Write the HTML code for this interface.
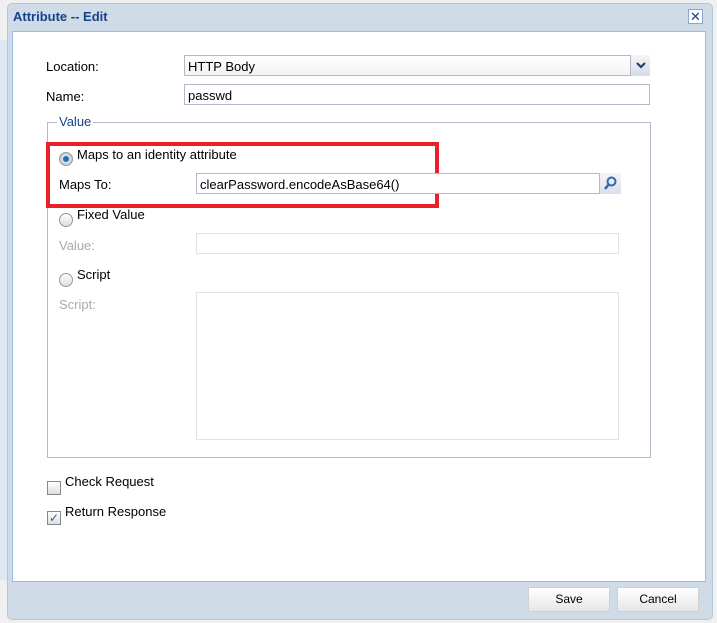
<!DOCTYPE html>
<html><head><style>
body{margin:0;width:717px;height:623px;background:#f0f0f0;position:relative;overflow:hidden;font-family:"Liberation Sans",sans-serif;font-size:12px;color:#000}
.a{position:absolute}
.dlg{left:7px;top:3px;width:704px;height:615px;background:#cfdbe7;border:1px solid #b5c6d8;border-radius:5px}
.body{left:12px;top:31px;width:692px;height:549px;background:#fff;border:1px solid #99bbe8}
.inp{position:absolute;border:1px solid #b5b8c8;background:#fff;height:21px;box-sizing:border-box;padding:3px 3px;font-size:13px}
.dis{border-color:#e3e3e3}
.lbl{position:absolute;font-size:13px}
.g{color:#aaa}
.radio{position:absolute;width:12px;height:12px;border-radius:50%;border:1px solid #999;background:linear-gradient(#fff,#ddd)}
.cb{position:absolute;width:12px;height:12px;border:1px solid #888;background:linear-gradient(#fff,#ddd)}
.btn{position:absolute;top:587px;height:23px;border:1px solid #d0d0d0;background:linear-gradient(#fff,#e6e6e6);text-align:center;line-height:23px;font-size:12px}
</style></head><body>
<div class="a" style="left:0;top:40px;width:7px;height:540px;background:#dfe8f1"></div>
<div class="a dlg"></div>
<div class="a" style="left:13px;top:9px;font-weight:bold;color:#15428b;font-size:13px">Attribute -- Edit</div>
<div class="a" style="left:688px;top:9px;width:13px;height:13px;border:1px solid #8aa7cc;background:#fff;color:#15428b;font-size:13px;line-height:13px;text-align:center">✕</div>
<div class="a body"></div>
<div class="lbl" style="left:46px;top:59px">Location:</div>
<div class="inp" style="left:184px;top:55px;width:466px;background:linear-gradient(#fff,#f3f3f3)">HTTP Body</div>
<div class="a" style="left:630px;top:55px;width:20px;height:21px;background:linear-gradient(#f5f5f5,#d8dce6);border-left:1px solid #b5b8c8;box-sizing:border-box"><svg width="20" height="21"><path d="M6 8 L10 12 L14 8" fill="none" stroke="#1f3f78" stroke-width="2.2"/></svg></div>
<div class="lbl" style="left:46px;top:89px">Name:</div>
<div class="inp" style="left:184px;top:84px;width:466px">passwd</div>
<div class="a" style="left:47px;top:122px;width:602px;height:334px;border:1px solid #b5b8c8"></div>
<div class="lbl" style="left:57px;top:114px;background:#fff;padding:0 2px;color:#15428b">Value</div>
<div class="a" style="left:46px;top:142px;width:385px;height:58px;border:4px solid #e8202a"></div>
<div class="radio" style="left:59px;top:152px;background:radial-gradient(#1a6fb8 30%,#dfe6ee 40%,#aaa)"></div>
<div class="lbl" style="left:77px;top:147px">Maps to an identity attribute</div>
<div class="lbl" style="left:59px;top:177px">Maps To:</div>
<div class="inp" style="left:196px;top:173px;width:424px">clearPassword.encodeAsBase64()</div>
<div class="a" style="left:599px;top:173px;width:21px;height:21px;background:linear-gradient(#f5f5f5,#dde);border-left:1px solid #b5b8c8"><svg width="21" height="21"><circle cx="11.5" cy="8.5" r="4" fill="none" stroke="#2a6bb0" stroke-width="2"/><path d="M9 11 L5 16" stroke="#2a6bb0" stroke-width="2.5"/></svg></div>
<div class="radio" style="left:59px;top:213px"></div>
<div class="lbl" style="left:77px;top:207px">Fixed Value</div>
<div class="lbl g" style="left:59px;top:238px">Value:</div>
<div class="inp dis" style="left:196px;top:233px;width:423px"></div>
<div class="radio" style="left:59px;top:273px"></div>
<div class="lbl" style="left:77px;top:267px">Script</div>
<div class="lbl g" style="left:59px;top:297px">Script:</div>
<div class="inp dis" style="left:196px;top:292px;width:423px;height:148px"></div>
<div class="cb" style="left:47px;top:481px"></div>
<div class="lbl" style="left:65px;top:474px">Check Request</div>
<div class="cb" style="left:47px;top:511px;color:#2a5db0;font-size:12px;line-height:12px;text-align:center">✓</div>
<div class="lbl" style="left:65px;top:504px">Return Response</div>
<div class="btn" style="left:528px;width:80px">Save</div>
<div class="btn" style="left:617px;width:80px">Cancel</div>
</body></html>
